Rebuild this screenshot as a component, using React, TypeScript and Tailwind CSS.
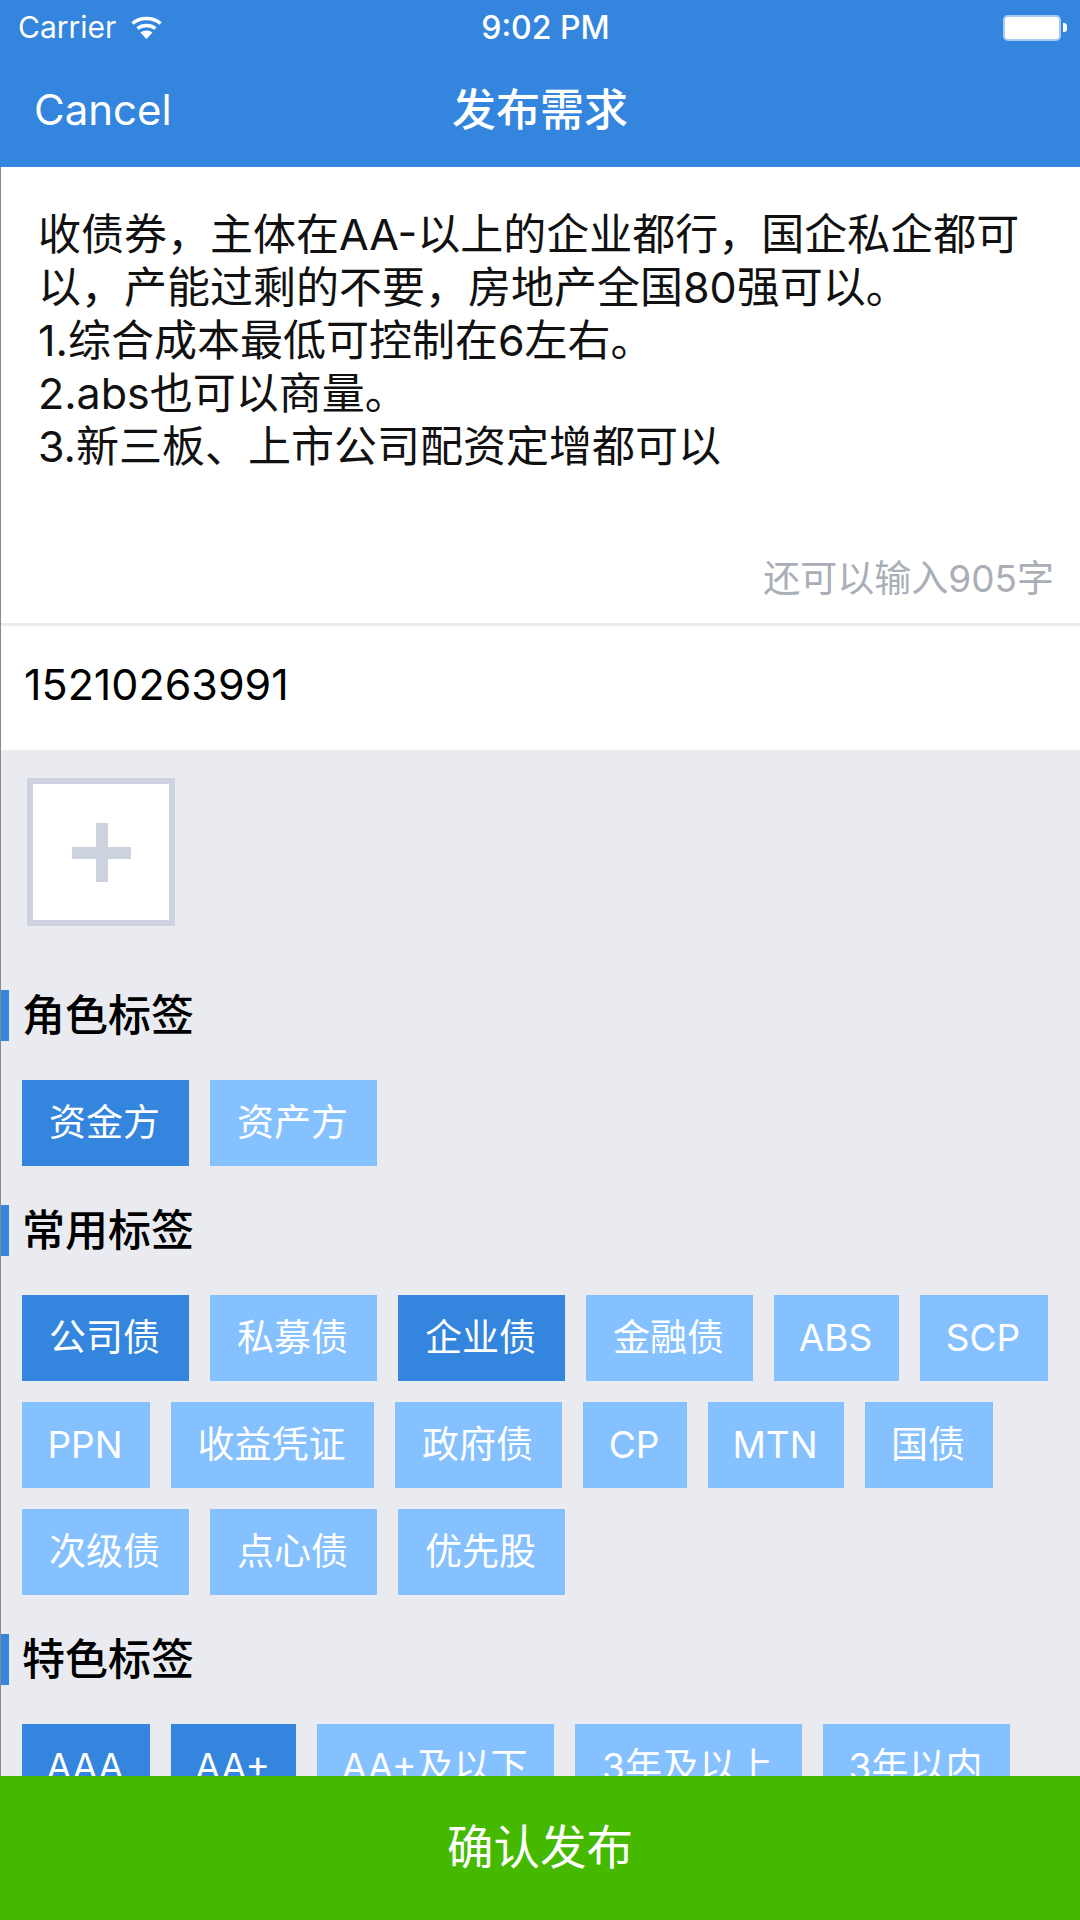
const FONT = 'font-["Inter","Noto_Sans_CJK_SC",sans-serif]';

interface TagItem {
  label: string;
  width: string;
  active?: boolean;
}

const roleTags: TagItem[] = [
  { label: '资金方', width: 'w-[167px]', active: true },
  { label: '资产方', width: 'w-[167px]' },
];

const commonTags: TagItem[] = [
  { label: '公司债', width: 'w-[167px]', active: true },
  { label: '私募债', width: 'w-[167px]' },
  { label: '企业债', width: 'w-[167px]', active: true },
  { label: '金融债', width: 'w-[167px]' },
  { label: 'ABS', width: 'w-[125px]' },
  { label: 'SCP', width: 'w-[128px]' },
  { label: 'PPN', width: 'w-[128px]' },
  { label: '收益凭证', width: 'w-[203px]' },
  { label: '政府债', width: 'w-[167px]' },
  { label: 'CP', width: 'w-[104px]' },
  { label: 'MTN', width: 'w-[136px]' },
  { label: '国债', width: 'w-[128px]' },
  { label: '次级债', width: 'w-[167px]' },
  { label: '点心债', width: 'w-[167px]' },
  { label: '优先股', width: 'w-[167px]' },
];

const specialTags: TagItem[] = [
  { label: 'AAA', width: 'w-[128px]', active: true },
  { label: 'AA+', width: 'w-[125px]', active: true },
  { label: 'AA+及以下', width: 'w-[237px]' },
  { label: '3年及以上', width: 'w-[227px]' },
  { label: '3年以内', width: 'w-[187px]' },
];

function TagGroup({ title, tags }: { title: string; tags: TagItem[] }) {
  return (
    <div>
      <div className="flex items-center h-[51px]">
        <div className="w-[8px] h-full bg-[#3385dd]" />
        <h3 className="ml-[13px] text-[43px] font-medium text-black leading-none">{title}</h3>
      </div>
      <div className="flex flex-wrap gap-[21px] pl-[21px] py-[39px]">
        {tags.map((tag) => (
          <div
            key={tag.label}
            className={`h-[86px] pr-[2px] flex items-center justify-center text-[37px] text-white ${tag.width} ${
              tag.active ? 'bg-[#3385dd]' : 'bg-[#85c0ff]'
            }`}
          >
            {tag.label}
          </div>
        ))}
      </div>
    </div>
  );
}

export default function App() {
  return (
    <div className={`w-[1080px] h-[1920px] flex flex-col overflow-hidden bg-[#e9ebf0] ${FONT}`}>
      {/* Header */}
      <div className="h-[167px] shrink-0 bg-[#3385dd] text-white flex flex-col">
        <div className="h-[55px] grid grid-cols-[1fr_auto_1fr] items-center pl-[18px] pr-[13px] text-[30px]">
          <div className="flex items-center gap-[15px]">
            <span>Carrier</span>
            <svg width="31" height="23" viewBox="0 0 31 23" fill="none" stroke="white" strokeWidth="3.4">
              <path d="M1.5 7.5C9 .8 22 .8 29.5 7.5" />
              <path d="M6.5 12.5C11.5 8.5 19.5 8.5 24.5 12.5" />
              <path d="M15.5 23L9.5 16.5C12.5 13.8 18.5 13.8 21.5 16.5Z" fill="white" stroke="none" />
            </svg>
          </div>
          <span className="ml-[6px] text-[32px] font-medium">9:02 PM</span>
          <div className="flex items-center justify-end">
            <div className="w-[58px] h-[26px] rounded-[5px] bg-white border-[2px] border-[#a9cdf2]" />
            <div className="ml-[2px] w-[4px] h-[9px] bg-white rounded-r-[3px]" />
          </div>
        </div>
        <div className="flex-1 grid grid-cols-[1fr_auto_1fr] items-center px-[34px] pb-[3px]">
          <span className="text-[42px]">Cancel</span>
          <span className="text-[44px] font-medium">发布需求</span>
        </div>
      </div>

      {/* Body */}
      <div className="flex-1 min-h-0 overflow-hidden border-l border-[#8a8a8a]">
        <div className="h-[459px] bg-white border-b-[3px] border-[#e9ebf0] flex flex-col pl-[37px] pr-[26px] pt-[41px] pb-[22px]">
          <p className="flex-1 text-[43px] leading-[53px] text-[#111]">
            收债券，主体在AA-以上的企业都行，国企私企都可以，产能过剩的不要，房地产全国80强可以。
            <br />
            1.综合成本最低可控制在6左右。
            <br />
            2.abs也可以商量。
            <br />
            3.新三板、上市公司配资定增都可以
          </p>
          <div className="text-right text-[37px] leading-[44px] text-[#aaaeb6]">还可以输入905字</div>
        </div>

        <div className="h-[124px] bg-white flex items-center pl-[23px] pb-[7px] text-[43px] text-black">15210263991</div>

        <div className="pt-[28px]">
          <div className="ml-[26px] w-[148px] h-[148px] bg-white border-[6px] border-[#ccd3df] flex items-center justify-center">
            <svg width="59" height="59" viewBox="0 0 59 59">
              <rect x="24" y="0" width="12" height="59" fill="#ccd3df" />
              <rect x="0" y="24" width="59" height="12" fill="#ccd3df" />
            </svg>
          </div>
        </div>

        <div className="pt-[64px]">
          <TagGroup title="角色标签" tags={roleTags} />
          <TagGroup title="常用标签" tags={commonTags} />
          <TagGroup title="特色标签" tags={specialTags} />
        </div>
      </div>

      {/* Footer */}
      <div className="h-[144px] shrink-0 bg-[#45b900] flex items-center justify-center text-white text-[46.5px]">
        确认发布
      </div>
    </div>
  );
}
